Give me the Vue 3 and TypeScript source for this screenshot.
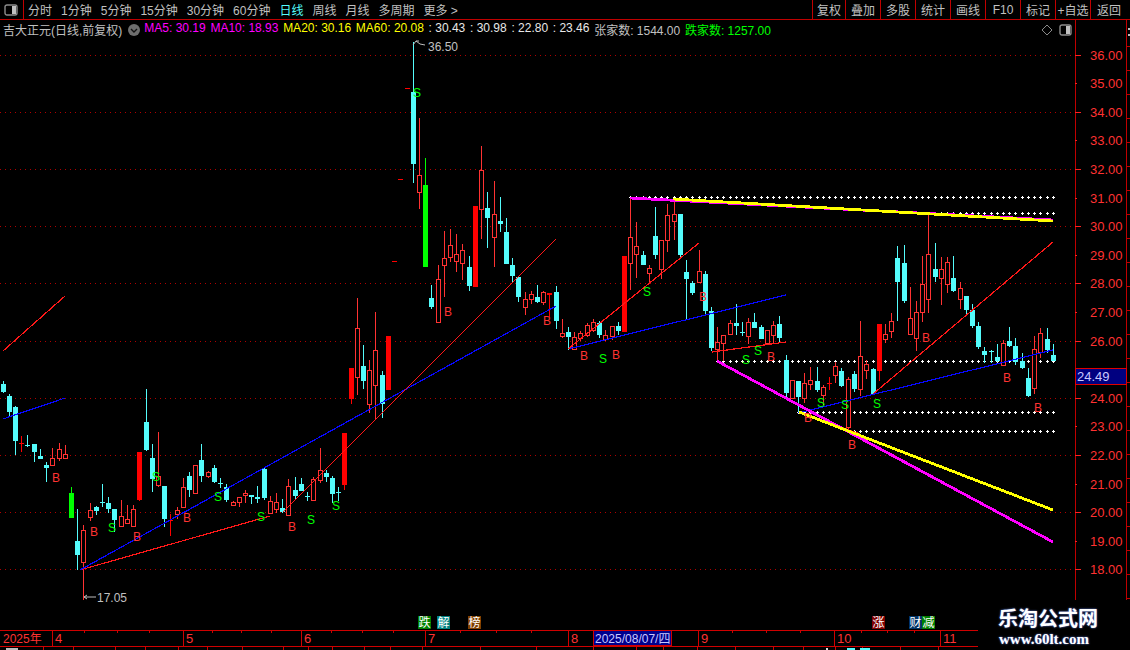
<script setup lang="ts">
type Kind = 'h' | 'c' | 'r' | 'g'
type Row = [number, number, number, number, number, Kind]

const raw: Row[] = [
  [3,381,384,392,393,'c'],[9,394,396,412,417,'c'],[15,406,407,441,455,'c'],[21,436,443,444,452,'r'],[27,435,445,446,447,'c'],
  [34,444,444,452,462,'c'],[40,449,456,459,459,'c'],[46,462,465,468,482,'c'],[52,448,458,465,465,'h'],[59,443,449,458,461,'h'],
  [65,445,454,458,459,'h'],[71,487,493,518,518,'g'],[77,509,541,555,570,'c'],[83,525,530,562,600,'h'],[90,503,510,517,521,'h'],
  [96,506,507,511,515,'c'],[102,484,502,503,507,'c'],[108,497,503,509,513,'c'],[114,509,509,520,532,'c'],[121,500,516,526,526,'h'],
  [127,505,519,523,523,'h'],[133,505,509,526,526,'h'],[139,452,452,500,501,'r'],[146,389,422,450,451,'c'],[152,444,458,479,492,'c'],
  [158,432,476,485,487,'h'],[164,486,486,519,527,'c'],[170,514,520,521,536,'r'],[177,507,510,514,519,'h'],[183,478,487,507,507,'h'],
  [189,472,476,490,497,'c'],[195,465,465,493,493,'h'],[201,444,460,476,482,'c'],[208,471,472,476,478,'h'],[214,465,468,482,483,'c'],
  [220,478,483,484,488,'c'],[226,484,487,500,502,'c'],[233,501,502,505,506,'h'],[239,497,497,502,507,'h'],[245,490,493,495,503,'h'],
  [251,495,495,497,504,'c'],[257,486,497,499,503,'c'],[264,467,469,498,500,'c'],[270,496,501,513,513,'h'],[276,493,502,509,513,'h'],
  [282,499,508,512,513,'c'],[288,479,486,515,515,'h'],[295,477,490,496,499,'c'],[301,478,484,491,491,'c'],[307,492,496,497,501,'c'],
  [313,477,479,500,500,'h'],[320,448,470,480,483,'h'],[326,470,473,477,482,'c'],[332,476,478,494,503,'c'],[338,487,492,493,501,'c'],
  [344,433,433,485,490,'r'],[351,368,368,399,404,'r'],[357,298,328,377,395,'h'],[363,345,366,381,389,'c'],[369,360,370,404,413,'h'],
  [375,312,350,385,420,'h'],[382,371,375,404,418,'c'],[388,336,336,390,390,'r'],[394,261,261,262,262,'r'],[400,179,179,180,180,'r'],
  [407,88,88,89,89,'r'],[413,42,92,164,183,'c'],[419,118,175,192,209,'h'],[425,158,185,267,267,'g'],[431,285,298,307,309,'c'],
  [438,265,279,322,322,'h'],[444,231,258,265,297,'h'],[450,229,245,257,262,'h'],[456,234,254,261,272,'h'],[462,244,250,263,280,'h'],
  [469,256,267,286,291,'c'],[475,206,206,287,287,'r'],[481,146,170,209,239,'h'],[487,192,208,218,248,'c'],[494,181,214,237,267,'h'],
  [500,197,221,224,232,'c'],[506,218,232,264,264,'c'],[512,258,265,276,282,'c'],[518,277,277,297,302,'c'],[525,292,299,307,315,'h'],
  [531,291,294,299,304,'h'],[537,285,297,302,303,'c'],[543,291,292,302,305,'h'],[549,293,293,295,317,'r'],[556,286,292,321,329,'c'],
  [562,319,333,336,338,'h'],[568,327,332,337,350,'c'],[574,332,337,349,350,'h'],[580,331,333,338,341,'h'],[587,323,325,335,337,'h'],
  [593,319,322,330,332,'h'],[599,321,323,335,338,'c'],[605,330,335,339,341,'h'],[612,326,326,336,340,'h'],[618,322,326,331,335,'c'],
  [624,256,256,332,332,'r'],[630,198,237,263,290,'h'],[636,222,246,254,278,'h'],[643,251,255,265,265,'c'],[649,265,268,273,283,'h'],
  [655,207,236,255,259,'c'],[661,240,240,269,279,'h'],[667,204,215,240,252,'h'],[674,198,214,221,240,'h'],[680,214,214,255,258,'c'],
  [686,260,272,279,320,'c'],[692,281,283,293,295,'c'],[699,250,271,282,283,'h'],[705,271,274,311,315,'c'],[711,307,311,348,351,'c'],
  [717,327,342,349,360,'h'],[723,335,335,343,361,'h'],[730,320,323,334,335,'h'],[736,304,323,326,335,'c'],[742,322,332,333,336,'c'],
  [748,318,322,336,344,'h'],[754,313,322,328,328,'c'],[761,325,327,339,339,'c'],[767,330,330,343,343,'h'],[773,321,325,335,343,'h'],
  [779,316,324,338,343,'c'],[786,355,360,393,397,'c'],[792,380,380,398,398,'h'],[798,381,381,397,413,'c'],[804,373,383,398,403,'h'],
  [810,367,380,384,390,'h'],[817,367,381,390,392,'c'],[823,385,387,395,405,'h'],[829,377,383,384,390,'r'],[835,362,366,375,383,'h'],
  [841,368,371,386,387,'c'],[848,377,379,427,430,'h'],[854,371,374,389,392,'c'],[860,321,356,389,396,'h'],[866,360,364,370,379,'h'],
  [873,368,369,394,394,'c'],[879,324,324,371,381,'r'],[885,324,334,339,343,'h'],[891,313,321,331,338,'h'],[897,246,258,282,321,'c'],
  [904,245,263,301,303,'c'],[910,287,318,334,334,'h'],[916,301,312,338,351,'h'],[922,256,284,312,322,'h'],[928,215,254,299,313,'h'],
  [935,243,269,277,282,'c'],[941,257,269,278,305,'h'],[947,257,262,284,293,'h'],[953,256,278,291,292,'c'],[960,282,288,299,309,'h'],
  [966,296,296,310,315,'c'],[972,304,310,326,328,'c'],[978,322,326,347,349,'c'],[984,347,351,355,363,'c'],[991,350,351,352,363,'c'],
  [997,344,357,361,362,'c'],[1003,340,343,365,365,'h'],[1009,327,341,346,347,'c'],[1015,338,346,362,365,'c'],[1022,353,361,368,369,'c'],
  [1028,368,378,396,397,'c'],[1034,336,349,388,394,'h'],[1040,328,333,352,358,'h'],[1047,328,339,350,353,'c'],[1053,344,355,361,361,'c'],
]

const candles = raw.map(([x, hi, top, bot, lo, kind]) => ({ x, hi, top, bot, lo, kind }))

const colors: Record<Kind, string> = { h: '#ff3232', c: '#54fcfc', r: '#ff0000', g: '#00ff00' }

const priceY = (p: number) => Math.round(54.5 + (36 - p) * 28.6)
const prices = Array.from({ length: 19 }, (_, i) => 36 - i)
const priceLabels = prices.filter((p) => p !== 25)
const grid = prices.filter((p) => p % 2 === 0).map(priceY)

const dotRows: [number, number][] = [[197, 630], [213, 923], [361, 717], [412, 798], [431, 853]]
const dotsPath = dotRows
  .map(([y, from]) =>
    candles
      .filter((c) => c.x >= from)
      .map((c) => `M${c.x - 1} ${y}.5h3M${c.x}.5 ${y - 1}v3`)
      .join(''),
  )
  .join('')

const thin = [
  { c: '#ff1818', p: '3,351 65,296' },
  { c: '#0808ff', p: '3,419 65,398' },
  { c: '#ff1818', p: '80,570 270,516' },
  { c: '#0808ff', p: '80,570 556,306' },
  { c: '#ff1818', p: '283,512 556,239' },
  { c: '#0808ff', p: '568,349 786,295' },
  { c: '#ff1818', p: '568,349 699,243' },
  { c: '#ff1818', p: '712,352 786,342' },
  { c: '#ff1818', p: '799,412 860,434' },
  { c: '#0808ff', p: '798,413 1053,350' },
  { c: '#ff1818', p: '873,394 1053,242' },
]

const thick = [
  { c: '#ff00ff', p: '630,198 1053,220' },
  { c: '#ff00ff', p: '717,361 1053,542' },
  { c: '#ffff00', p: '673,199 1053,221' },
  { c: '#ffff00', p: '799,412 1053,510' },
]

const marks: [string, number, number][] = [
  ['B', 56, 477], ['B', 94, 531], ['S', 112, 527], ['B', 137, 536], ['S', 156, 476], ['B', 187, 517],
  ['S', 218, 496], ['S', 261, 516], ['B', 292, 526], ['S', 311, 519], ['S', 336, 505], ['S', 417, 92],
  ['B', 448, 311], ['B', 547, 320], ['S', 647, 291], ['B', 584, 355], ['S', 603, 358], ['B', 616, 354],
  ['B', 703, 296], ['S', 758, 350], ['S', 746, 359], ['B', 771, 356], ['B', 808, 417], ['S', 821, 402],
  ['S', 845, 404], ['S', 877, 403], ['B', 852, 444], ['B', 926, 337], ['B', 1007, 377], ['B', 1038, 407],
]

const badges: [string, number, string][] = [
  ['跌', 418, '#008000'], ['解', 437, '#008080'], ['榜', 468, '#804000'],
  ['涨', 872, '#800000'], ['财', 909, '#003366'], ['减', 922, '#008000'],
]

const months: [string, number][] = [['4', 52], ['5', 183], ['6', 301], ['7', 425], ['8', 568], ['9', 698], ['10', 834], ['11', 940]]
const upTicks = [84, 117, 149, 212, 241, 271, 331, 362, 393, 460, 496, 531, 732, 766, 800, 861, 887, 914]
const downTicks = [43, 73, 115, 145, 178, 207, 242, 283, 308, 332, 364, 390, 422, 480, 536, 593, 636, 663, 697, 735, 773, 803, 835, 862, 900, 938]

const navItems = ['分时', '1分钟', '5分钟', '15分钟', '30分钟', '60分钟', '日线', '周线', '月线', '多周期', '更多 >']
const tools = ['复权', '叠加', '多股', '统计', '画线', 'F10', '标记', '+自选', '返回']

const quotes: [string, string][] = [
  ['MA5: 30.19', 'mag'], ['MA10: 18.93', 'mag'], ['MA20: 30.16', 'yel'], ['MA60: 20.08', 'yel'],
  [': 30.43', 'wht'], [': 30.98', 'wht'], [': 22.80', 'wht'], [': 23.46', 'wht'],
  ['张家数: 1544.00', 'gry'], ['跌家数: 1257.00', 'grn'],
]
</script>

<template>
  <div class="screen">
    <header class="toolbar">
      <div class="corner">
        <svg width="14" height="12" viewBox="0 0 14 12">
          <rect x="1" y="1" width="12" height="10" rx="2" fill="#000" stroke="#8c8c8c" stroke-width="1.4" />
          <rect x="8" y="2" width="4" height="8" fill="#c0c0c0" />
        </svg>
      </div>
      <nav class="nav">
        <span v-for="(n, i) in navItems" :key="n" :class="{ active: i === 6 }">{{ n }}</span>
      </nav>
      <div class="tools">
        <span v-for="t in tools" :key="t" class="tool">{{ t }}</span>
      </div>
    </header>

    <div class="main">
      <div class="chart-col">
        <div class="info">
          <span class="name">吉大正元(日线,前复权)</span>
          <svg class="down" width="12" height="12" viewBox="0 0 12 12">
            <circle cx="6" cy="6" r="6" fill="#6e6e6e" />
            <path d="M3 5l3 3 3-3" fill="none" stroke="#111" stroke-width="1.4" />
          </svg>
          <div class="quotes">
            <span v-for="q in quotes" :key="q[0]" :class="q[1]">{{ q[0] }}</span>
          </div>
          <div class="info-icons">
            <svg width="12" height="12" viewBox="0 0 12 12">
              <path d="M6 1l5 5-5 5-5-5z" fill="none" stroke="#8a8a8a" />
            </svg>
            <svg width="13" height="12" viewBox="0 0 13 12">
              <rect x="1" y="1" width="11" height="10" rx="2" fill="#000" stroke="#8c8c8c" stroke-width="1.4" />
              <rect x="7" y="2" width="4" height="8" fill="#c0c0c0" />
            </svg>
          </div>
        </div>

        <svg class="plot" width="1075" height="591" viewBox="0 39 1075 591">
          <line v-for="y in grid" :key="y" x1="0" x2="1075" :y1="y + 0.5" :y2="y + 0.5" class="grid" />
          <path :d="dotsPath" class="dots" />

          <g v-for="c in candles" :key="c.x" class="crisp">
            <rect :x="c.x" :y="c.hi" width="1" :height="Math.max(1, c.lo - c.hi)" :fill="colors[c.kind]" />
            <rect
              v-if="c.kind === 'h'"
              :x="c.x - 1.5"
              :y="c.top + 0.5"
              width="4"
              :height="Math.max(1, c.bot - c.top)"
              fill="#000"
              :stroke="colors[c.kind]"
            />
            <rect
              v-else
              :x="c.x - 2"
              :y="c.top"
              width="5"
              :height="Math.max(1, c.bot - c.top)"
              :fill="colors[c.kind]"
            />
          </g>

          <polyline v-for="l in thin" :key="l.p" :points="l.p" :stroke="l.c" class="trend" />
          <polyline v-for="l in thick" :key="l.p + l.c" :points="l.p" :stroke="l.c" class="trend wide" />

          <text
            v-for="m in marks"
            :key="`${m[1]}-${m[2]}`"
            :x="m[1]"
            :y="m[2] + 4.5"
            text-anchor="middle"
            class="mark"
            :fill="m[0] === 'S' ? '#00ff00' : '#ff3232'"
          >{{ m[0] }}</text>

          <path d="M413 45l3-4h3M416 41l4 3 5 1" class="pointer" />
          <text x="428" y="51" class="extreme">36.50</text>
          <path d="M84 597h12M84 597l3-2M84 597l3 2" class="pointer" />
          <text x="97" y="602" class="extreme">17.05</text>

          <g v-for="b in badges" :key="b[0]">
            <rect :x="b[1]" y="616" width="13" height="13" :fill="b[2]" />
            <text :x="b[1] + 6.5" y="627" text-anchor="middle" class="badge">{{ b[0] }}</text>
          </g>
        </svg>
      </div>

      <svg class="axis" width="55" height="610" viewBox="1075 20 55 610">
        <g class="crisp">
          <rect x="1075" y="20" width="1" height="610" fill="#c00000" />
          <rect x="1126" y="20" width="1" height="610" fill="#c00000" />
          <rect
            v-for="p in prices"
            :key="p"
            x="1075"
            :y="priceY(p)"
            :width="p % 2 === 0 ? 6 : 2"
            height="1"
            fill="#ff2020"
          />
          <rect v-for="n in 24" :key="n" x="1127" :y="22 + n * 24" width="3" height="1" fill="#c00000" />
          <rect x="1128" y="28" width="2" height="2" fill="#c0c0c0" />
          <rect x="1128" y="34" width="2" height="2" fill="#c0c0c0" />
        </g>
        <text v-for="p in priceLabels" :key="p" x="1090" :y="priceY(p) + 5" class="price">{{ p.toFixed(2) }}</text>
        <rect x="1075.5" y="368.5" width="51" height="16" fill="#000080" stroke="#e00000" />
        <text x="1077" y="381" class="current">24.49</text>
      </svg>
    </div>

    <svg class="time" width="1130" height="20" viewBox="0 630 1130 20">
      <g class="crisp">
        <rect x="0" y="630" width="1130" height="1" fill="#d00000" />
        <rect x="0" y="646" width="1130" height="1" fill="#d00000" />
        <rect v-for="t in upTicks" :key="t" :x="t" y="631" width="1" height="2" fill="#d00000" />
        <rect v-for="t in downTicks" :key="t" :x="t" y="647" width="1" height="3" fill="#d00000" />
        <rect v-for="m in months" :key="m[0]" :x="m[1]" y="631" width="1" height="15" fill="#d00000" />
        <rect x="6" y="648" width="12" height="2" fill="#bdbdbd" />
        <rect x="826" y="648" width="2" height="2" fill="#e0e0e0" />
        <rect x="847" y="648" width="8" height="2" fill="#54fcfc" />
        <rect x="860" y="648" width="10" height="2" fill="#54fcfc" />
      </g>
      <text x="3" y="643" class="year">2025年</text>
      <text v-for="m in months" :key="m[1]" :x="m[1] + 3" y="643" class="month">{{ m[0] }}</text>
      <rect x="593.5" y="630.5" width="78" height="15" fill="#00008c" stroke="#d00000" />
      <text x="595" y="643" class="date">2025/08/07/四</text>
    </svg>

    <aside class="stamp">
      <div class="stamp-title">乐淘公式网</div>
      <div class="stamp-url">www.60lt.com</div>
    </aside>
  </div>
</template>

<style scoped>
.screen {
  position: relative;
  width: 1130px;
  height: 650px;
  overflow: hidden;
  background: #000;
  display: flex;
  flex-direction: column;
  font-family: "Liberation Sans", "Noto Sans CJK SC", sans-serif;
  font-size: 12px;
  color: #c0c0c0;
}
.toolbar {
  height: 19px;
  box-sizing: content-box;
  border-bottom: 1px solid #c00000;
  display: flex;
  align-items: stretch;
  padding-right: 3px;
  flex: none;
}
.corner {
  width: 23px;
  border-right: 1px solid #c00000;
  display: flex;
  align-items: center;
  justify-content: center;
  box-sizing: content-box;
  flex: none;
}
.corner svg {
  margin-left: -1px;
}
.nav {
  display: flex;
  gap: 9px;
  align-items: center;
  padding-left: 4px;
  white-space: nowrap;
}
.nav .active {
  color: #54fcfc;
}
.tools {
  margin-left: auto;
  display: flex;
}
.tool {
  width: 35px;
  border-left: 1px solid #c00000;
  display: flex;
  align-items: center;
  justify-content: center;
  white-space: nowrap;
  box-sizing: border-box;
}
.tool:first-child {
  width: 33px;
}
.tool:last-child {
  width: 37px;
}
.main {
  display: flex;
  height: 610px;
  flex: none;
}
.chart-col {
  width: 1075px;
  display: flex;
  flex-direction: column;
}
.info {
  height: 19px;
  display: flex;
  align-items: center;
  padding: 0 3px;
  white-space: nowrap;
  flex: none;
}
.down {
  margin: 0 4px 0 6px;
  flex: none;
}
.quotes {
  display: flex;
  gap: 4.7px;
}
.mag { color: #ff00ff; }
.yel { color: #ffff00; }
.wht { color: #e8e8e8; }
.gry { color: #c0c0c0; }
.grn { color: #00ff00; }
.info-icons {
  margin-left: auto;
  display: flex;
  gap: 6px;
  padding-right: 0;
}
.plot,
.axis,
.time {
  display: block;
  flex: none;
}
.crisp {
  shape-rendering: crispEdges;
}
.grid {
  stroke: #b00000;
  stroke-dasharray: 1 4;
  shape-rendering: crispEdges;
}
.dots {
  stroke: #fff;
  fill: none;
  shape-rendering: crispEdges;
}
.trend {
  fill: none;
  stroke-width: 1.2;
  shape-rendering: crispEdges;
}
.trend.wide {
  stroke-width: 2.8;
}
.mark {
  font-size: 12px;
}
.pointer {
  fill: none;
  stroke: #bdbdbd;
}
.extreme {
  font-size: 12px;
  fill: #c0c0c0;
}
.badge {
  font-size: 12px;
  fill: #fff;
}
.price {
  font-size: 13px;
  fill: #ff3232;
}
.current {
  font-size: 13px;
  fill: #c8c8ff;
}
.year {
  font-size: 12px;
  fill: #ff3232;
}
.month {
  font-size: 13px;
  fill: #ff3232;
}
.date {
  font-size: 12px;
  fill: #c8c8ff;
}
.stamp {
  position: absolute;
  right: 0;
  bottom: 0;
  width: 152px;
  height: 50px;
  background: #000;
  padding: 6px 30px 0 20px;
  box-sizing: border-box;
  color: #fff;
}
.stamp-title {
  font-family: "Noto Sans CJK SC", sans-serif;
  font-weight: 700;
  font-size: 20px;
  line-height: 24px;
  white-space: nowrap;
  text-shadow: 0 0 2px #6a8cff;
}
.stamp-url {
  font-family: "Liberation Serif", serif;
  font-weight: 700;
  font-size: 15px;
  line-height: 18px;
  padding-left: 1px;
  white-space: nowrap;
  text-shadow: 0 0 2px #6a8cff;
}
</style>
